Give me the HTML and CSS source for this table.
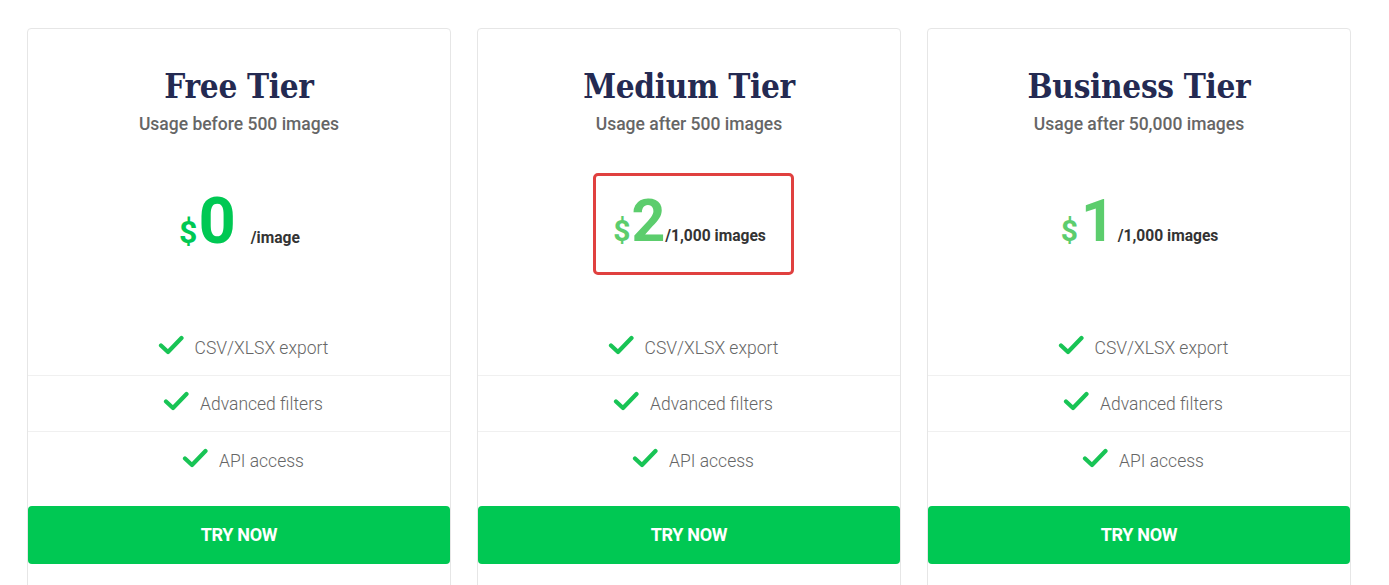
FILE: index.html
```html
<!DOCTYPE html>
<html>
<head>
<meta charset="utf-8">
<link rel="stylesheet" href="styles.css">
</head>
<body>
<div class="plans">
  <div class="card">
    <div class="head">
      <h2 class="title">Free Tier</h2>
      <div class="sub">Usage before 500 images</div>
    </div>
    <div class="price">
      <div class="price-box">
        <span class="cur strong">$</span><span class="amt strong">0</span><span class="unit unit-gap">/image</span>
      </div>
    </div>
    <ul class="features">
      <li><svg class="chk" viewBox="0 0 26 20"><path d="M3 10.5l7 6.5L23.5 3" fill="none" stroke="#18c455" stroke-width="4.2" stroke-linecap="round" stroke-linejoin="round"/></svg><span>CSV/XLSX export</span></li>
      <li><svg class="chk" viewBox="0 0 26 20"><path d="M3 10.5l7 6.5L23.5 3" fill="none" stroke="#18c455" stroke-width="4.2" stroke-linecap="round" stroke-linejoin="round"/></svg><span>Advanced filters</span></li>
      <li><svg class="chk" viewBox="0 0 26 20"><path d="M3 10.5l7 6.5L23.5 3" fill="none" stroke="#18c455" stroke-width="4.2" stroke-linecap="round" stroke-linejoin="round"/></svg><span>API access</span></li>
    </ul>
    <button class="btn">TRY NOW</button>
  </div>

  <div class="card">
    <div class="head">
      <h2 class="title">Medium Tier</h2>
      <div class="sub">Usage after 500 images</div>
    </div>
    <div class="price">
      <div class="price-box highlight">
        <span class="cur">$</span><span class="amt">2</span><span class="unit">/1,000 images</span>
      </div>
    </div>
    <ul class="features">
      <li><svg class="chk" viewBox="0 0 26 20"><path d="M3 10.5l7 6.5L23.5 3" fill="none" stroke="#18c455" stroke-width="4.2" stroke-linecap="round" stroke-linejoin="round"/></svg><span>CSV/XLSX export</span></li>
      <li><svg class="chk" viewBox="0 0 26 20"><path d="M3 10.5l7 6.5L23.5 3" fill="none" stroke="#18c455" stroke-width="4.2" stroke-linecap="round" stroke-linejoin="round"/></svg><span>Advanced filters</span></li>
      <li><svg class="chk" viewBox="0 0 26 20"><path d="M3 10.5l7 6.5L23.5 3" fill="none" stroke="#18c455" stroke-width="4.2" stroke-linecap="round" stroke-linejoin="round"/></svg><span>API access</span></li>
    </ul>
    <button class="btn">TRY NOW</button>
  </div>

  <div class="card">
    <div class="head">
      <h2 class="title">Business Tier</h2>
      <div class="sub">Usage after 50,000 images</div>
    </div>
    <div class="price">
      <div class="price-box">
        <span class="cur cur-gap">$</span><span class="amt">1</span><span class="unit unit-gap-s">/1,000 images</span>
      </div>
    </div>
    <ul class="features">
      <li><svg class="chk" viewBox="0 0 26 20"><path d="M3 10.5l7 6.5L23.5 3" fill="none" stroke="#18c455" stroke-width="4.2" stroke-linecap="round" stroke-linejoin="round"/></svg><span>CSV/XLSX export</span></li>
      <li><svg class="chk" viewBox="0 0 26 20"><path d="M3 10.5l7 6.5L23.5 3" fill="none" stroke="#18c455" stroke-width="4.2" stroke-linecap="round" stroke-linejoin="round"/></svg><span>Advanced filters</span></li>
      <li><svg class="chk" viewBox="0 0 26 20"><path d="M3 10.5l7 6.5L23.5 3" fill="none" stroke="#18c455" stroke-width="4.2" stroke-linecap="round" stroke-linejoin="round"/></svg><span>API access</span></li>
    </ul>
    <button class="btn">TRY NOW</button>
  </div>
</div>
</body>
</html>
```
FILE: styles.css
```css
* { box-sizing: border-box; }
html, body { margin: 0; padding: 0; background: #fff; }
body { font-family: Roboto, "Liberation Sans", sans-serif; overflow: hidden; height: 585px; }

.plans {
  display: grid;
  grid-template-columns: repeat(3, 424px);
  gap: 26px;
  padding: 28px 0 0 27px;
}

.card {
  border: 1px solid #e6e6e6;
  border-radius: 4px;
  height: 600px;
  display: flex;
  flex-direction: column;
}

.head {
  height: 112px;
  display: flex;
  flex-direction: column;
  align-items: center;
  padding-top: 37px;
}

.title {
  margin: 0;
  font-family: "DejaVu Serif Condensed", "DejaVu Serif", "Liberation Serif", serif;
  font-stretch: condensed;
  font-weight: bold;
  font-size: 33px;
  line-height: 42px;
  letter-spacing: -0.3px;
  color: #242a52;
}

.sub {
  font-size: 17.5px;
  font-weight: 500;
  color: #666;
  line-height: 22px;
  margin-top: 5px;
}

.price {
  height: 179px;
  display: flex;
  justify-content: center;
  align-items: center;
  padding-bottom: 14px;
}

.price-box {
  display: flex;
  align-items: baseline;
  border: 3px solid transparent;
  border-radius: 5px;
  padding: 0 25px 0 17px;
  height: 102px;
  line-height: 90px;
  margin-left: 9px;
}

.price-box.highlight { border-color: #e0403f; }

.cur {
  font-size: 30px;
  font-weight: 700;
  color: #5ccd6d;
  margin-right: 1px;
}
.amt {
  font-size: 59px;
  font-weight: 700;
  color: #5ccd6d;
}
.cur.strong { color: #00c853; font-size: 32px; }
.amt.strong { color: #00c853; font-size: 65px; }
.cur-gap { margin-right: 3px; }
.unit {
  font-size: 15.6px;
  font-weight: 700;
  color: #333;
}
.unit-gap { margin-left: 15px; }
.unit-gap-s { margin-left: 3px; }

.features {
  list-style: none;
  margin: 0;
  padding: 0;
}
.features li {
  height: 56px;
  display: flex;
  justify-content: center;
  align-items: center;
  gap: 11px;
  font-size: 17.5px;
  font-weight: 300;
  color: #666;
  border-bottom: 1px solid #f0f0f0;
  padding-left: 8px;
}
.features li:last-child { border-bottom: none; height: 57px; }
.chk { width: 26px; height: 20px; margin-top: -6px; }

.btn {
  margin: 17px 0 0 0;
  height: 58px;
  border: none;
  border-radius: 4px;
  background: #00c853;
  color: #fff;
  font-family: Roboto, "Liberation Sans", sans-serif;
  font-weight: 700;
  font-size: 18px;
  letter-spacing: -0.3px;
  padding-bottom: 2px;
}
```
